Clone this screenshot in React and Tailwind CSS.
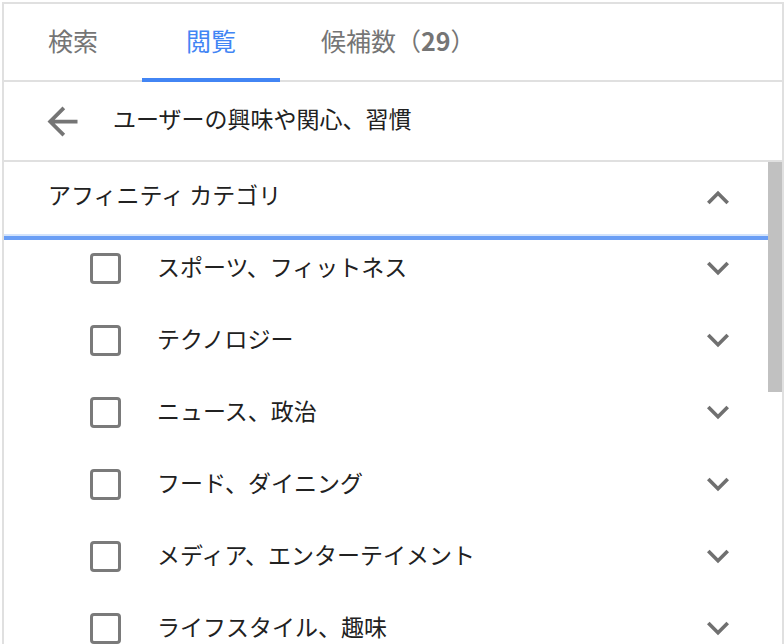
import React from 'react';

const items = [
  'スポーツ、フィットネス',
  'テクノロジー',
  'ニュース、政治',
  'フード、ダイニング',
  'メディア、エンターテイメント',
  'ライフスタイル、趣味',
];

const ExpandMore = ({ up = false }) => (
  <svg viewBox="0 0 24 24" className={`w-[44px] h-[44px] fill-[#707070] ${up ? 'rotate-180' : ''}`}>
    <path d="M16.59 8.59L12 13.17 7.41 8.59 6 10l6 6 6-6z" />
  </svg>
);

const ArrowBack = () => (
  <svg viewBox="0 0 24 24" className="w-[45px] h-[45px] fill-[#757575]">
    <path d="M20 11H7.83l5.59-5.59L12 4l-8 8 8 8 1.41-1.41L7.83 13H20v-2z" />
  </svg>
);

export default function App() {
  return (
    <div
      className="w-[784px] h-[644px] overflow-hidden bg-white pl-[2px] pt-[2px]"
      style={{ fontFamily: '"Noto Sans CJK JP", "Noto Sans", sans-serif' }}
    >
      <div className="w-[782px] h-[660px] border-2 border-b-0 border-[#e0e0e0] flex flex-col">
        {/* Tabs */}
        <div className="flex h-[78px] border-b-2 border-[#e0e0e0] shrink-0">
          <div className="relative flex items-center px-[44px] text-[25px] text-[#757575]">
            <span className="mb-[2px]">検索</span>
          </div>
          <div className="relative flex items-center px-[44px] text-[25px] text-[#4285f4]">
            <span className="mb-[2px]">閲覧</span>
            <div className="absolute left-0 right-0 bottom-[-2px] h-[4px] bg-[#4285f4]" />
          </div>
          <div className="relative flex items-center px-[41px] text-[25px] text-[#757575]">
            <span className="mb-[2px]">
              候補数（<span className="font-semibold">29</span>）
            </span>
          </div>
        </div>

        {/* Breadcrumb header */}
        <div className="flex items-center h-[80px] border-b-2 border-[#e0e0e0] shrink-0">
          <div className="ml-[36px] w-[45px] flex items-center">
            <ArrowBack />
          </div>
          <span className="ml-[28px] mb-[6px] text-[23px] text-[#212121]">ユーザーの興味や関心、習慣</span>
        </div>

        {/* Scroll area */}
        <div className="flex flex-1 min-h-0">
          <div className="flex-1 flex flex-col">
            <div className="flex items-center justify-between h-[72px] pl-[44px] pr-[28px]">
              <span className="mb-[8px] text-[23px] text-[#212121]">アフィニティ カテゴリ</span>
              <ExpandMore up />
            </div>
            <div className="h-[2px] bg-[#d2e3fc]" />
            <div className="h-[4px] bg-[#6a9ef5]" />
            <div className="flex flex-col gap-4">
              {items.map((label) => (
                <div key={label} className="flex items-center h-[56px] pr-[28px]">
                  <div className="ml-[86px] w-[31px] h-[31px] border-[3px] border-[#7a7a7a] rounded-[4px] shrink-0" />
                  <span className="ml-[36px] mb-[4px] flex-1 text-[23px] text-[#212121]">{label}</span>
                  <ExpandMore />
                </div>
              ))}
            </div>
          </div>
          <div className="w-[14px] shrink-0">
            <div className="h-[230px] bg-[#c1c1c1]" />
          </div>
        </div>
      </div>
    </div>
  );
}
